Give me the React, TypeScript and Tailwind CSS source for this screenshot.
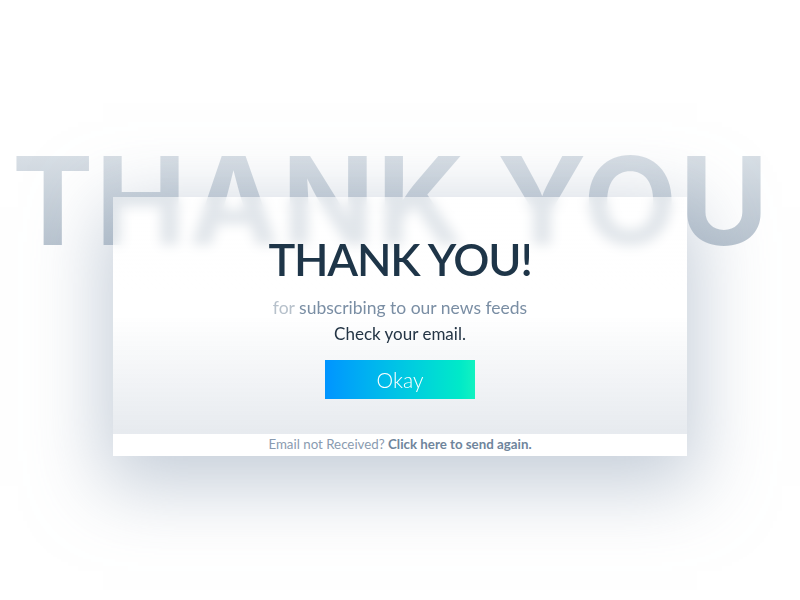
import React from "react";

export default function App() {
  return (
    <div className="relative w-[800px] h-[600px] bg-white overflow-hidden" style={{ fontFamily: "Lato, 'Noto Sans', sans-serif" }}>
      <div
        className="absolute left-[12px] top-[140px] text-[122px] leading-[1] font-bold tracking-[2px] whitespace-nowrap bg-gradient-to-b from-[#dde3e9] to-[#b3bfcb] bg-clip-text text-transparent"
        style={{ fontFamily: "Inter, sans-serif" }}
      >
        THANK YOU
      </div>
      <div className="relative mt-[197px] ml-[113px] w-[574px] h-[259px] flex flex-col shadow-[0_20px_70px_10px_rgba(150,165,185,0.55)]">
        <div className="flex-1 flex flex-col items-center bg-gradient-to-b from-white/45 via-white/80 to-[#e4e8ed]/90 backdrop-blur-[6px]">
          <div className="mt-[34px] text-[45px] leading-[56px] text-[#1e3548] font-semibold tracking-[-1.2px]">THANK YOU!</div>
          <div className="mt-[10px] text-[17.5px] leading-[22px] text-[#7a8ea4]">
            <span className="text-[#b7c1cb]">for</span> subscribing to our news feeds
          </div>
          <div className="mt-[4px] text-[17px] leading-[22px] text-[#243545]">Check your email.</div>
          <div className="mt-[15px] w-[150px] h-[39px] flex items-center justify-center bg-gradient-to-r from-[#0094ff] to-[#12f2c0] text-white text-[21px] font-light">
            Okay
          </div>
        </div>
        <div className="h-[22px] bg-white flex items-center justify-center text-[13.3px] text-[#8a9bb0]">
          Email not Received?&nbsp;<span className="font-bold text-[#6f859c]">Click here to send again.</span>
        </div>
      </div>
    </div>
  );
}
